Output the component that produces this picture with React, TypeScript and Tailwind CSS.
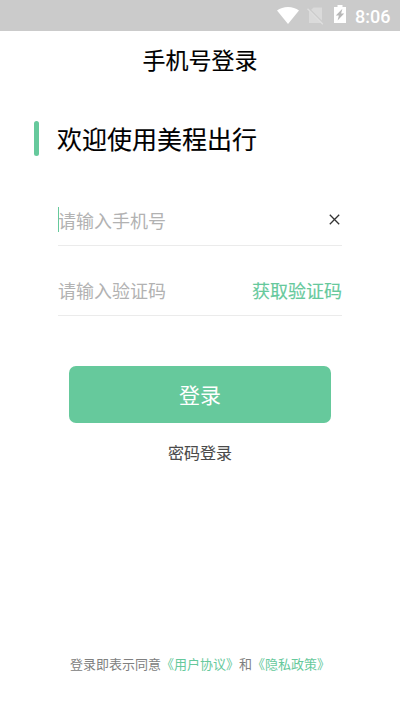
import React, { useState } from 'react';

const StatusBar = () => (
  <div className="h-[31px] shrink-0 bg-[#cbcbcb] flex items-center justify-end pr-[10px] text-white">
    <svg className="w-[22px] h-[17px] -mt-px" viewBox="0 0 22 17" fill="currentColor">
      <path d="M11 17 0 3.6C3 1.3 6.8 0 11 0s8 1.3 11 3.6z" />
    </svg>
    <svg className="w-[17px] h-[18px] ml-[8px] mt-px" viewBox="0 0 17 18">
      <path d="M6.5 0.5H15V16H2V5z" fill="#dadada" />
      <path d="M1.6 1.2 16.6 16.2" stroke="#cbcbcb" strokeWidth="1.4" />
      <path d="M0.5 1.8 15.8 17.2" stroke="#dedede" strokeWidth="1.4" />
    </svg>
    <svg className="w-3 h-[18px] ml-[10px] -mt-[3px]" viewBox="0 0 12 18">
      <path d="M3.5 0h5v2H12v16H0V2h3.5z" fill="currentColor" />
      <path d="M8.4 3.8 1.8 10.6h3.1L3.6 15.6 10.2 8.4H7.1z" fill="#b8b8b8" />
    </svg>
    <span className="ml-[9px] mt-[3px] w-[35px] text-lg leading-5 font-medium font-['Roboto',sans-serif]">8:06</span>
  </div>
);

const App = () => {
  const [phone, setPhone] = useState('');
  const [code, setCode] = useState('');

  return (
    <div className="h-[711px] w-[400px] bg-white flex flex-col overflow-hidden font-['Noto_Sans_CJK_SC',sans-serif]">
      <StatusBar />

      <header className="h-14 shrink-0 flex items-center justify-center">
        <h1 className="text-[23px] leading-8 font-normal text-black [-webkit-text-stroke:0.15px]">手机号登录</h1>
      </header>

      <div className="mt-[34px] ml-[34px] h-[35px] shrink-0 flex items-center">
        <span className="w-[5px] h-[35px] rounded-full bg-[#66c99c]" />
        <h2 className="ml-[18px] text-[25px] leading-[35px] font-normal text-black [-webkit-text-stroke:0.15px]">欢迎使用美程出行</h2>
      </div>

      <form className="flex flex-col" onSubmit={(e) => e.preventDefault()}>
        {/* Phone */}
        <div className="relative mt-[38px] mx-[58px] h-[52px] border-b border-[#ebebeb] flex items-center">
          <span className="absolute left-0 top-[13px] w-px h-[25px] bg-[#66c99c]" />
          <input
            type="tel"
            value={phone}
            onChange={(e) => setPhone(e.target.value)}
            placeholder="请输入手机号"
            className="flex-1 min-w-0 h-[51px] text-lg text-black placeholder:text-[#b2b2b2] caret-[#66c99c] focus:outline-none"
          />
          <button type="button" onClick={() => setPhone('')} className="mr-[2px]" aria-label="清除">
            <svg className="w-[11px] h-[11px]" viewBox="0 0 11 11" fill="none" stroke="#333" strokeWidth="1.3">
              <path d="M0.8 0.8 10.2 10.2M10.2 0.8 0.8 10.2" />
            </svg>
          </button>
        </div>

        {/* Verification code */}
        <div className="mt-[18px] mx-[58px] h-[52px] border-b border-[#ebebeb] flex items-center">
          <input
            type="text"
            value={code}
            onChange={(e) => setCode(e.target.value)}
            placeholder="请输入验证码"
            className="flex-1 min-w-0 h-[51px] text-lg text-black placeholder:text-[#b2b2b2] focus:outline-none"
          />
          <button type="button" className="shrink-0 text-lg text-[#66c99c] [-webkit-text-stroke:0.15px]">获取验证码</button>
        </div>

        <button type="submit" className="mt-[50px] mx-[69px] h-[57px] rounded-[7px] bg-[#66c99c] text-white text-[21px]">
          登录
        </button>
      </form>

      <button type="button" className="mt-[17px] self-center text-base leading-6 text-[#4a4a4a] [-webkit-text-stroke:0.1px]">密码登录</button>

      <p className="mt-auto mb-[37px] text-center text-[13px] leading-5 whitespace-nowrap text-[#808080]">
        登录即表示同意<span className="text-[#66c99c]">《用户协议》</span>和<span className="text-[#66c99c]">《隐私政策》</span>
      </p>
    </div>
  );
};

export default App;
